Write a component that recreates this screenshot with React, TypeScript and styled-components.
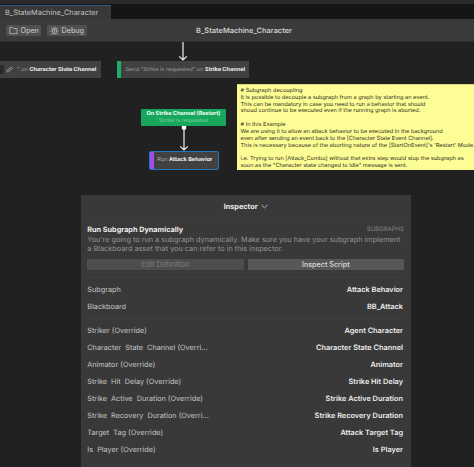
import React from 'react';
import styled, { createGlobalStyle } from 'styled-components';

const GlobalStyle = createGlobalStyle`
  * { box-sizing: border-box; }
  html, body { margin: 0; height: 100%; background: #212121; overflow: hidden; }
  body { font-family: Inter, "Liberation Sans", sans-serif; font-size: 7.3px; color: #c8c8c8; text-rendering: geometricPrecision; }
  svg { display: block; }
`;

const Window = styled.div`
  width: 474px;
  height: 467px;
  display: flex;
  flex-direction: column;
  overflow: hidden;
  background: #212121;
`;

const TabBar = styled.header`
  height: 19px;
  flex: none;
  display: flex;
  align-items: flex-end;
  background: #151515;
  border-top: 4px solid #2a2a2a;
`;

const Tab = styled.div`
  width: 111px;
  height: 14px;
  padding-left: 5px;
  line-height: 14px;
  font-size: 7.36px;
  color: #c2c2c2;
  background: #383838;
  border-top: 1px solid #315b80;
`;

const Toolbar = styled.div`
  height: 23px;
  flex: none;
  display: grid;
  grid-template-columns: 1fr auto 1fr;
  align-items: center;
  padding: 0 0 0 6px;
  background: #3a3a3a;
  border-bottom: 1px solid #303030;
`;

const ToolGroup = styled.div`
  display: flex;
  gap: 6px;
`;

const ToolButton = styled.button<{ $width: number }>`
  width: ${({ $width }) => $width}px;
  height: 11px;
  display: flex;
  align-items: center;
  gap: 3px;
  padding: 0 0 0 2.5px;
  border: 0;
  border-radius: 1px;
  background: #505050;
  color: #cfcfcf;
  font: 400 7.2px/11px Inter, sans-serif;
`;

const Title = styled.h1`
  margin: 0 0 0 8px;
  font-size: 7.37px;
  font-weight: 600;
  line-height: 11px;
  color: #cdcdcd;
`;

const Canvas = styled.main`
  position: relative;
  flex: 1;
  overflow: hidden;
`;

const Placed = styled.div<{ $x: number; $y: number; $w: number; $h: number }>`
  position: absolute;
  left: ${({ $x }) => $x}px;
  top: ${({ $y }) => $y}px;
  width: ${({ $w }) => $w}px;
  height: ${({ $h }) => $h}px;
`;

const ActionNode = styled(Placed)<{ $accent?: string; $pad: number }>`
  display: flex;
  align-items: center;
  padding-left: ${({ $pad }) => $pad}px;
  background: ${({ $accent }) =>
    $accent ? `linear-gradient(to right, ${$accent} 4px, #414141 4px)` : '#414141'};
  font-size: 5.6px;
  color: #9b9b9b;
  white-space: pre;
  b { color: #f0f0f0; font-weight: 700; }
`;

const SelectedNode = styled(ActionNode)`
  border: 1px solid #1f78c0;
  border-radius: 2px;
  color: #aaa;
`;

const LinkBadge = styled.span`
  display: flex;
  align-items: center;
  width: 17px;
  height: 9px;
  padding-left: 6px;
  background: linear-gradient(to right, #2b2b2b 4px, transparent 4px);
`;

const EventNode = styled(Placed)`
  display: flex;
  flex-direction: column;
  align-items: center;
  padding-top: 2px;
  border-radius: 1px;
  background: #16a75c;
  font-size: 5.63px;
  line-height: 7px;
  white-space: nowrap;
  color: #79cf9f;
  b { color: #f4fff8; font-size: 5.55px; }
`;

const Note = styled(Placed)`
  padding: 3px 0 0 3.5px;
  background: #fdfd96;
  border-top: 1px solid #d8d884;
  color: #2e2e1b;
  font-size: 5.62px;
  line-height: 6.82px;
  white-space: pre;
`;

const Panel = styled(Placed)`
  display: flex;
  flex-direction: column;
  padding: 0 6.5px 0 6.3px;
  background: #393939;
`;

const PanelHeader = styled.div`
  height: 24px;
  flex: none;
  display: flex;
  justify-content: center;
  align-items: center;
  gap: 3px;
  font-size: 7.3px;
  font-weight: 700;
  color: #ececec;
  border-bottom: 1px solid #3d3d3d;
`;

const Heading = styled.div`
  display: flex;
  justify-content: space-between;
  align-items: center;
  height: 11px;
  flex: none;
  margin-top: 5px;
  font-size: 7.28px;
  font-weight: 700;
  color: #ededed;
`;

const Category = styled.span`
  font-size: 6.05px;
  font-weight: 400;
  color: #858585;
`;

const Description = styled.p`
  margin: 1px 0 0;
  font-size: 7.3px;
  line-height: 8.8px;
  color: #949494;
  white-space: pre;
`;

const ButtonRow = styled.div`
  display: grid;
  grid-template-columns: 1fr 1fr;
  gap: 4px;
  margin-top: 5px;
  flex: none;
`;

const PanelButton = styled.button`
  height: 11px;
  padding: 0;
  border: 0;
  background: #575757;
  color: #dedede;
  font: 500 7.2px/11px Inter, sans-serif;
  &:disabled { background: #4d4d4d; color: #7d7d7d; font-weight: 400; font-size: 7.35px; }
`;

const Fields = styled.dl<{ $gap: number }>`
  margin: ${({ $gap }) => $gap}px 0 0;
  padding: 3px 1px 0 0;
  border-top: 1px solid #404040;
`;

const Field = styled.div`
  height: 17.1px;
  display: flex;
  justify-content: space-between;
  align-items: center;
  white-space: pre;
`;

const FieldName = styled.dt`
  font-size: 7.28px;
  color: #c6c6c6;
`;

const FieldValue = styled.dd`
  margin: 0;
  font-size: 7.36px;
  font-weight: 600;
  color: #ececec;
`;

const FolderIcon = () => (
  <svg width="9" height="9" viewBox="0 0 9 9" fill="none" stroke="#bdbdbd" strokeWidth="0.8">
    <path d="M.8 7.7V1.4h2.7l1 1.1h3.6v5.2z" strokeLinejoin="round" />
  </svg>
);

const BugIcon = () => (
  <svg width="9" height="9" viewBox="0 0 9 9" fill="none" stroke="#bdbdbd" strokeWidth="0.75">
    <path d="M2.7 3.2h3.6v2.9a1.8 2 0 0 1-3.6 0zM3 3.1a1.5 1.6 0 0 1 3 0M.3 5.1h2.4M6.3 5.1h2.4M.8 1.6l2 1.9M8.2 1.6l-2 1.9M.8 8.4l2-1.8M8.2 8.4l-2-1.8M4.5 3.3v4.6" />
  </svg>
);

const LinkIcon = () => (
  <svg width="7" height="7" viewBox="0 0 7 7" fill="none" stroke="#b5b5b5" strokeWidth="0.75">
    <path d="M3 4.4a1.2 1.2 0 0 1 0-1.6L4.4 1.4A1.15 1.15 0 0 1 6 3L5.2 3.8M4 2.7a1.2 1.2 0 0 1 0 1.6L2.6 5.7A1.15 1.15 0 0 1 1 4.1l.8-.8" />
  </svg>
);

const Chevron = () => (
  <svg width="7" height="5" viewBox="0 0 7 5" fill="none" stroke="#c9c9c9" strokeWidth="0.9">
    <path d="M.6 1l2.9 2.8L6.4 1" />
  </svg>
);

const Arrow = ({ length, anchored }: { length: number; anchored?: boolean }) => (
  <svg width="10" height={length} viewBox={`0 0 10 ${length}`} fill="none" stroke="#f2f2f2" strokeWidth="1.2">
    {anchored && <path d="M2.8 0h4.4v2.4L5.8 4H4.2L2.8 2.4z" fill="#fff" stroke="none" />}
    <path d={`M5 0V${length - 1}M1.2 ${length - 4.6}L5 ${length - 1}l3.8-3.6`} />
  </svg>
);

const noteText = `# Subgraph decoupling
It is possible to decouple a subgraph from a graph by starting an event.
This can be mandatory in case you need to run a behavior that should
shoud continue to be executed even if the running graph is aborted.

# In this Example
We are using it to allow an attack behavior to be executed in the background
even after sending an event back to the [Character State Event Channel].
This is necessary because of the aborting nature of the [StartOnEvent]'s 'Restart' Mode.

i.e. Trying to run [Attack_Combo] without that extra step would stop the subgraph as
soon as the "Character state changed to Idle" message is sent.`;

const assets = [
  ['Subgraph', 'Attack Behavior'],
  ['Blackboard', 'BB_Attack'],
];

const overrides = [
  ['Striker (Override)', 'Agent Character'],
  ['Character  State  Channel (Overri...', 'Character State Channel'],
  ['Animator (Override)', 'Animator'],
  ['Strike  Hit  Delay (Override)', 'Strike Hit Delay'],
  ['Strike  Active  Duration (Override)', 'Strike Active Duration'],
  ['Strike  Recovery  Duration (Overri...', 'Strike Recovery Duration'],
  ['Target  Tag (Override)', 'Attack Target Tag'],
  ['Is  Player (Override)', 'Is Player'],
];

const FieldList = ({ rows, gap }: { rows: string[][]; gap: number }) => (
  <Fields $gap={gap}>
    {rows.map(([name, value]) => (
      <Field key={name}>
        <FieldName>{name}</FieldName>
        <FieldValue>{value}</FieldValue>
      </Field>
    ))}
  </Fields>
);

export default function App() {
  return (
    <Window>
      <GlobalStyle />
      <TabBar>
        <Tab>B_StateMachine_Character</Tab>
      </TabBar>
      <Toolbar>
        <ToolGroup>
          <ToolButton $width={35}><FolderIcon />Open</ToolButton>
          <ToolButton $width={40}><BugIcon />Debug</ToolButton>
        </ToolGroup>
        <Title>B_StateMachine_Character</Title>
      </Toolbar>
      <Canvas>
        <ActionNode $x={0} $y={19} $w={101} $h={17} $pad={0}>
          <LinkBadge><LinkIcon /></LinkBadge>
          {'" on '}<b>Character State Channel</b>
        </ActionNode>
        <ActionNode $x={117} $y={19} $w={132} $h={17} $pad={8.5} $accent="#1fae68">
          {'Send "Strike is requested" on '}<b>Strike Channel</b>
        </ActionNode>
        <Placed $x={178.4} $y={-1} $w={10} $h={20}><Arrow length={20} /></Placed>
        <EventNode $x={141} $y={67} $w={85} $h={17}>
          <b>On Strike Channel (Restart)</b>
          <span>Strike is requested</span>
        </EventNode>
        <Placed $x={178.5} $y={84} $w={10} $h={25}><Arrow length={25} anchored /></Placed>
        <SelectedNode $x={149} $y={109} $w={69.5} $h={18.5} $pad={7.3} $accent="#a04df0">
          {'Run '}<b>Attack Behavior</b>
        </SelectedNode>
        <Note $x={237} $y={42} $w={237} $h={86}>{noteText}</Note>
        <Panel $x={81} $y={153} $w={329.5} $h={272}>
          <PanelHeader>Inspector<Chevron /></PanelHeader>
          <Heading>
            Run Subgraph Dynamically
            <Category>SUBGRAPHS</Category>
          </Heading>
          <Description>
            {"You're going to run a subgraph dynamically. Make sure you have your subgraph implement\na Blackboard asset that you can refer to in this inspector."}
          </Description>
          <ButtonRow>
            <PanelButton disabled>Edit Definition</PanelButton>
            <PanelButton>Inspect Script</PanelButton>
          </ButtonRow>
          <FieldList rows={assets} gap={7} />
          <FieldList rows={overrides} gap={3} />
        </Panel>
      </Canvas>
    </Window>
  );
}
